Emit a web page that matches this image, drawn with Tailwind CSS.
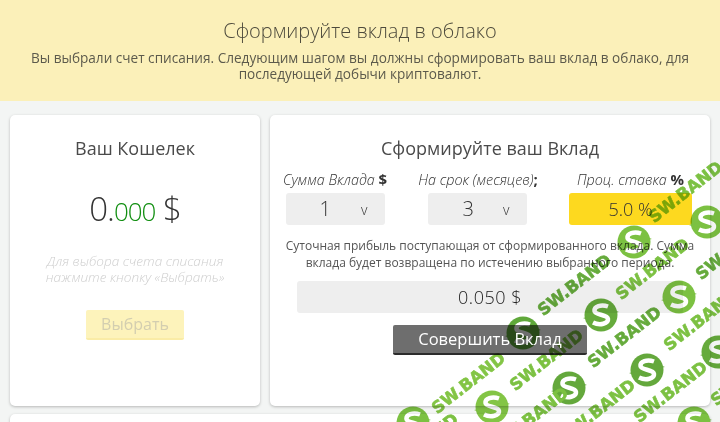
<!DOCTYPE html>
<html lang="en">
<head>
    <meta charset="UTF-8">
    <title>Вклад</title>
    <script src="https://cdn.jsdelivr.net/npm/@tailwindcss/browser@4"></script>
</head>
<body class="bg-[#f3f5f4] font-['Open_Sans',sans-serif] text-[#4a4a4a] h-[422px] w-[720px] overflow-hidden relative">
    <!-- Banner -->
    <div class="bg-[#fbf0b9] h-[101px] pt-[18px] text-center">
        <h1 class="text-[20px] leading-[26px] font-light text-[#4d4a3c]">Сформируйте вклад в облако</h1>
        <p class="mt-[6px] text-[13.6px] leading-[16px] text-[#5c5a4c] px-[20px]">Вы выбрали счет списания. Следующим шагом вы должны сформировать ваш вклад в облако, для последующей добычи криптовалют.</p>
    </div>

    <div class="flex gap-[10px] px-[10px] pt-[14px] items-start">
        <!-- Wallet -->
        <div class="w-[250px] h-[291px] bg-white rounded-[5px] shadow-[0_1px_3px_rgba(0,0,0,0.25)] text-center pt-[20px]">
            <h2 class="text-[18px] leading-[26px] text-[#4a4a4a]">Ваш Кошелек</h2>
            <div class="mt-[26px] text-[33px] leading-[44px] font-light text-[#333] tracking-[-1px]">0.<span class="text-[#128f12] text-[26px]">000</span> $</div>
            <p class="mt-[20px] text-[13.6px] leading-[16px] italic font-light text-[#cfcfcf]">Для выбора счета списания<br>нажмите кнопку «Выбрать»</p>
            <button class="mt-[25px] w-[98px] h-[30px] bg-[#fdf3bb] border-b-2 border-[#faeca6] rounded-[2px] text-[16px] text-[#d3ceb0]">Выбрать</button>
        </div>

        <!-- Deposit form -->
        <div class="w-[440px] h-[291px] bg-white rounded-[5px] shadow-[0_1px_3px_rgba(0,0,0,0.25)] text-center pt-[20px]">
            <h2 class="text-[18px] leading-[26px] text-[#4a4a4a]">Сформируйте ваш Вклад</h2>
            <div class="mt-[9px] flex pl-[12px] items-start">
                <div class="w-[135px]">
                    <div class="w-[106px] text-[14.4px] leading-[18px] italic font-light text-[#333] whitespace-nowrap">Сумма Вклада <b class="font-bold not-italic text-[15px]">$</b></div>
                    <div class="mt-[4px] ml-[4px] w-[99px] h-[32px] bg-[#eeeeee] rounded-[3px] flex items-center text-[20px] font-light text-[#333]">
                        <span class="w-[75px] text-right pr-[30px]">1</span><span class="text-[14px]">v</span>
                    </div>
                </div>
                <div class="w-[158px]">
                    <div class="w-[122px] text-[14.4px] leading-[18px] italic font-light text-[#333] whitespace-nowrap">На срок (месяцев)<b class="font-bold not-italic text-[15px]">;</b></div>
                    <div class="mt-[4px] ml-[11px] w-[99px] h-[32px] bg-[#eeeeee] rounded-[3px] flex items-center text-[20px] font-light text-[#333]">
                        <span class="w-[75px] text-right pr-[29px]">3</span><span class="text-[14px]">v</span>
                    </div>
                </div>
                <div class="w-[123px] -ml-[6px]">
                    <div class="text-[14.4px] leading-[18px] italic font-light text-[#333] whitespace-nowrap">Проц. ставка <b class="font-bold not-italic text-[15px]">%</b></div>
                    <div class="mt-[4px] w-[123px] h-[32px] bg-[#fdd91f] rounded-[3px] flex items-center justify-center text-[18px] font-light text-[#333]">5.0 %</div>
                </div>
            </div>
            <p class="mt-[12px] text-[12px] leading-[17px] text-[#555]">Суточная прибыль поступающая от сформированного вклада. Сумма<br>вклада будет возвращена по истечению выбранного периода.</p>
            <div class="mt-[10px] mx-[27px] h-[32px] bg-[#eeeeee] rounded-[3px] flex items-center justify-center text-[18px] tracking-[0.5px] font-light text-[#222]">0.050 $</div>
            <button class="mt-[12px] w-[194px] h-[30px] bg-[#6e6e6e] border-b-2 border-[#2c2c2c] rounded-[2px] text-[16.5px] text-white"><span class="relative z-10">Совершить Вклад</span></button>
        </div>
    </div>

    <!-- Next card, cut off by the window -->
    <div class="mx-[10px] mt-[8px] h-[40px] bg-white rounded-[5px] shadow-[0_1px_3px_rgba(0,0,0,0.25)]"></div>

    <!-- Watermark -->
    <div id="wm" class="absolute inset-0 pointer-events-none overflow-hidden mix-blend-multiply"></div>
    <script>
        var logos = [[523,333,'#5fa83a'],[601,315,'#66ab3c'],[679,297,'#7cc142'],[647,370,'#64a83c'],[569,388,'#64a83c'],[492,407,'#83c545'],[413,423,'#7cc142'],[694,423,'#7cc142'],[718,352,'#66ab3c'],[634,242,'#7cc142'],[707,222,'#7cc142']];
        var labels = [[470,385,'#83c545'],[548,362,'#7cc142'],[626,339,'#66ab3c'],[702,322,'#7cc142'],[576,287,'#66ab3c'],[654,271,'#7cc142'],[672,394,'#7cc142'],[600,412,'#7cc142'],[533,420,'#7cc142'],[687,194,'#7cc142'],[734,251,'#66ab3c'],[749,377,'#7cc142'],[423,446,'#7cc142']];
        var wm = document.getElementById('wm');
        logos.forEach(function (p) {
            var s = document.createElementNS('http://www.w3.org/2000/svg', 'svg');
            s.setAttribute('width', 36); s.setAttribute('height', 36); s.setAttribute('viewBox', '0 0 36 36');
            s.setAttribute('style', 'position:absolute;left:' + (p[0] - 18) + 'px;top:' + (p[1] - 18) + 'px');
            s.innerHTML = '<circle cx="18" cy="18" r="16.5" fill="' + p[2] + '"/>' +
                '<path d="M25 9.5 C18 7 11 9.5 11.5 14 C12 18.5 24.5 17 25 22 C25.5 26.5 17 29 10 25.5" fill="none" stroke="#fff" stroke-width="4.5"/>' +
                '<path d="M0 21 L11 19 L8 24 Z M36 15 L25 17 L28 12 Z" fill="' + p[2] + '"/>';
            wm.appendChild(s);
        });
        labels.forEach(function (p) {
            var t = document.createElement('div');
            t.textContent = 'SW.BAND';
            t.setAttribute('style', 'position:absolute;left:' + (p[0] - 50) + 'px;top:' + (p[1] - 12) + 'px;width:100px;height:24px;line-height:24px;text-align:center;font:bold 16.5px "DejaVu Sans",sans-serif;-webkit-text-stroke:0.6px ' + p[2] + ';color:' + p[2] + ';transform:rotate(-38deg);white-space:nowrap');
            wm.appendChild(t);
        });
    </script>
</body>
</html>
